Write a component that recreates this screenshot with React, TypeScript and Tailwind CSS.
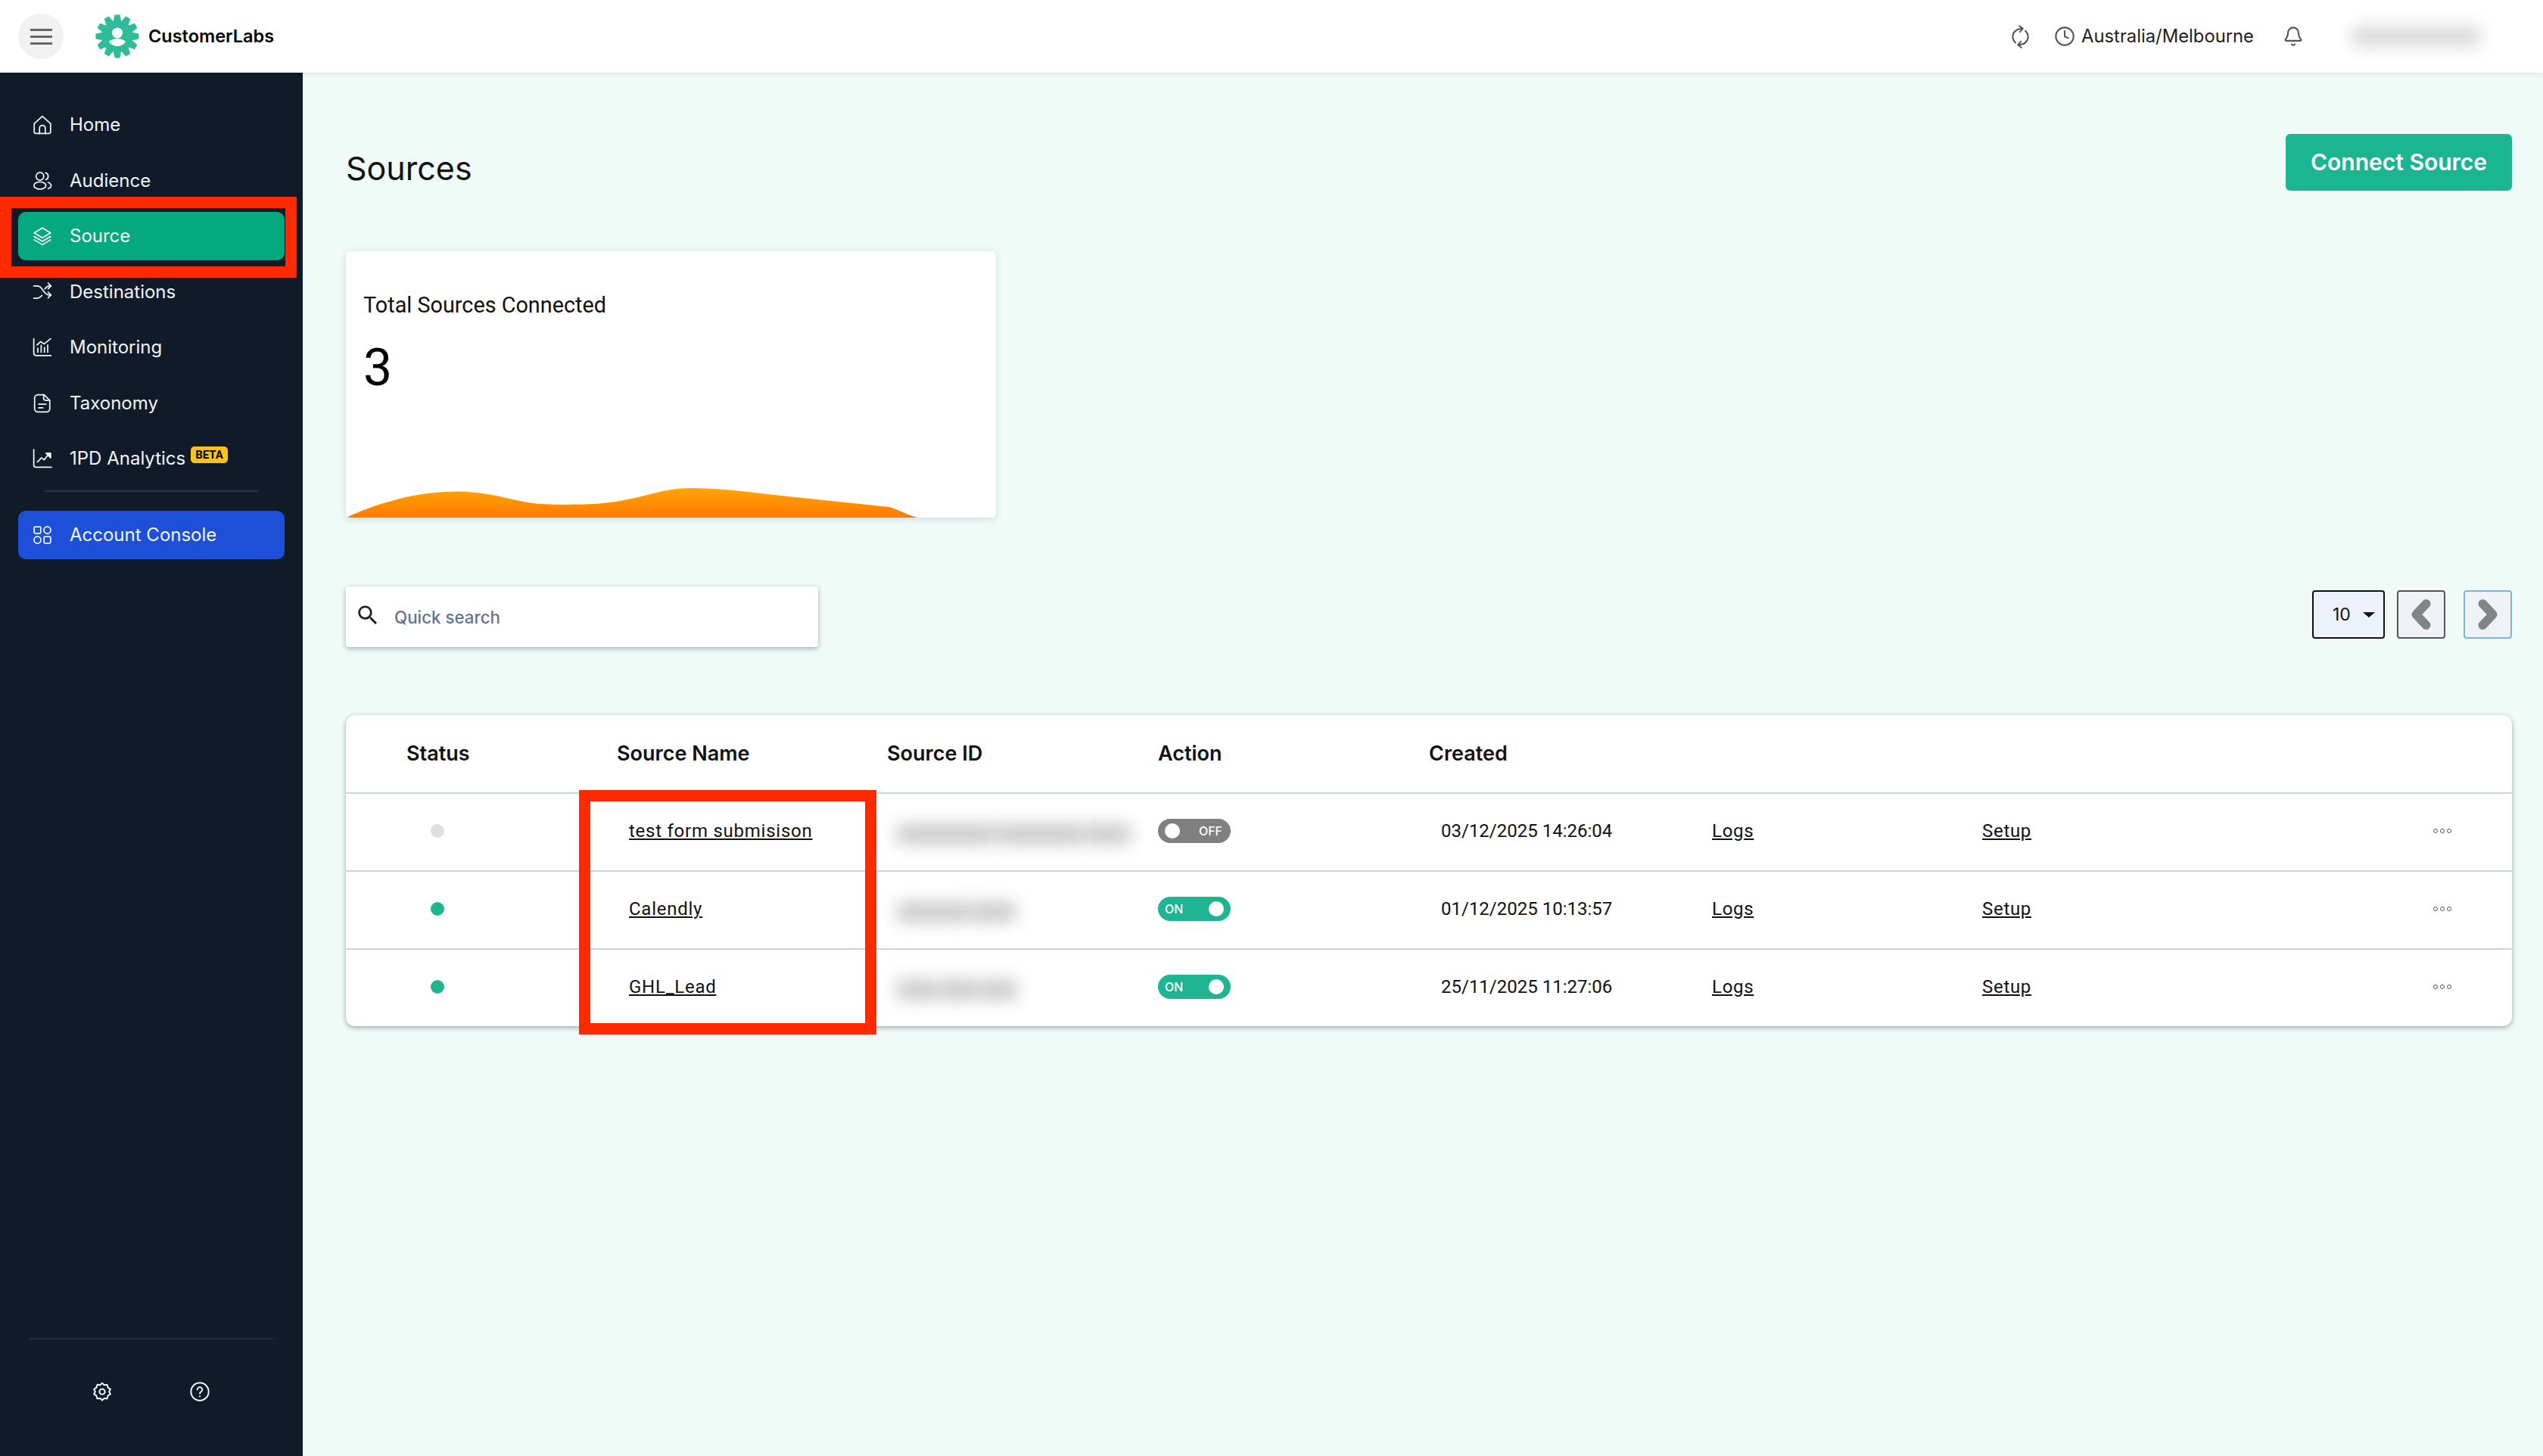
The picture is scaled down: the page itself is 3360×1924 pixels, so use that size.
import { Bell, Clock, RefreshCw } from "lucide-react";
import type { ReactNode } from "react";

const poppins = "font-['Inter','Noto_Sans',sans-serif]";
const roboto = "font-['Roboto','Liberation_Sans',sans-serif]";

function NavIcon({ children }: { children: ReactNode }) {
  return (
    <svg
      viewBox="0 0 24 24"
      fill="none"
      stroke="currentColor"
      strokeWidth="1.6"
      strokeLinecap="round"
      strokeLinejoin="round"
      className="w-[26px] h-[26px] shrink-0"
    >
      {children}
    </svg>
  );
}

const navItems: { label: string; icon: ReactNode; active?: boolean; beta?: boolean }[] = [
  {
    label: "Home",
    icon: (
      <NavIcon>
        <path d="M2 10.500 12 1.500l10 9v10a2 2 0 0 1-2 2H4a2 2 0 0 1-2-2z" />
        <path d="M8.500 22.500V16a3.500 3.500 0 0 1 7 0v6.500" />
      </NavIcon>
    ),
  },
  {
    label: "Audience",
    icon: (
      <NavIcon>
        <circle cx="9" cy="6.500" r="4.700" />
        <ellipse cx="9" cy="17.700" rx="7.300" ry="4.400" />
        <path d="M16 2.200a4.400 4.400 0 0 1 0 8.400" />
        <path d="M19 13.800c2.400.8 3.600 2.300 3.600 3.900s-1.200 3-3.600 3.800" />
      </NavIcon>
    ),
  },
  {
    label: "Source",
    active: true,
    icon: (
      <NavIcon>
        <path d="m12 2 10 6-10 6L2 8z" />
        <path d="m2 12.500 10 6 10-6" />
        <path d="m2 16.500 10 6 10-6" />
      </NavIcon>
    ),
  },
  {
    label: "Destinations",
    icon: (
      <NavIcon>
        <path d="M1.500 4.500h4c2.500 0 4.500 1.500 6 3.500l3 4c1.500 2 3.500 3.500 6 3.500h2" />
        <path d="M1.500 19.500h4c2.500 0 4.500-1.500 6-3.500" />
        <path d="M15 8c1.500-2 3-3.500 5.500-3.500h2" />
        <path d="m19 1 3.500 3.500L19 8" />
        <path d="m19 12 3.500 3.500L19 19" />
      </NavIcon>
    ),
  },
  {
    label: "Monitoring",
    icon: (
      <NavIcon>
        <path d="M1.500 1.500V19a3 3 0 0 0 3 3h18" />
        <path d="M5.500 9 10 5l4 3 8-6.500" />
        <path d="M6.500 18v-5M10.500 18V9.500M14.500 18v-6M18.500 18V9" />
      </NavIcon>
    ),
  },
  {
    label: "Taxonomy",
    icon: (
      <NavIcon>
        <path d="M6.500 1.500h7.500l7 7v10a4 4 0 0 1-4 4H6.500a4 4 0 0 1-4-4v-13a4 4 0 0 1 4-4z" />
        <path d="M13.500 1.500v4a3 3 0 0 0 3 3h4.500" />
        <path d="M7.500 13h9M7.500 17.500h5" />
      </NavIcon>
    ),
  },
  {
    label: "1PD Analytics",
    beta: true,
    icon: (
      <NavIcon>
        <path d="M1.500 1V20a2.500 2.500 0 0 0 2.500 2.500h19" />
        <path d="m6 16 5-5 3 2.500 6-7" />
        <path d="M16.500 5.500h5.500v5.500z" fill="currentColor" />
      </NavIcon>
    ),
  },
];

const rows = [
  { name: "test form submisison", on: false, created: "03/12/2025 14:26:04", blur: ["w-[130px]", "w-[115px]", "w-[60px]"] },
  { name: "Calendly", on: true, created: "01/12/2025 10:13:57", blur: ["w-[95px]", "w-[60px]"] },
  { name: "GHL_Lead", on: true, created: "25/11/2025 11:27:06", blur: ["w-[55px]", "w-[50px]", "w-[50px]"] },
];

function Logo() {
  const teeth = Array.from({ length: 12 }, (_, i) => i * 30);
  return (
    <svg viewBox="0 0 58 58" className="w-[58px] h-[58px]">
      {teeth.map((deg) => (
        <path
          key={deg}
          d="M25.500 .5h7l2 10h-11z"
          fill="#2fbd99"
          transform={`rotate(${deg} 29 29)`}
        />
      ))}
      <circle cx="29" cy="29" r="20.500" fill="#2fbd99" />
      <circle cx="29" cy="24.500" r="7" fill="#fff" />
      <path d="M18 36c3-3 7.500-4 11-4s8 1 11 4c-2.500 4-7 6-11 6s-8.500-2-11-6z" fill="#fff" />
    </svg>
  );
}

function Toggle({ on }: { on: boolean }) {
  return (
    <div
      className={`w-[96px] h-[32px] rounded-full flex items-center justify-between px-[9px] text-white text-[16px] font-medium ${poppins} ${
        on ? "bg-[#1fb592]" : "bg-[#808080] flex-row-reverse"
      }`}
    >
      <span className={on ? "" : "mr-[2px]"}>{on ? "ON" : "OFF"}</span>
      <span className="w-[20px] h-[20px] rounded-full bg-white" />
    </div>
  );
}

export default function App() {
  return (
    <div className="w-[3360px] h-[1924px] flex flex-col overflow-hidden bg-[#f0faf7]">
      <header className="h-[96px] shrink-0 bg-white flex items-center shadow-[0_2px_6px_rgba(0,0,0,0.08)] relative z-10">
        <button className="ml-[24px] w-[60px] h-[60px] rounded-full bg-[#f1f1f1] flex flex-col items-center justify-center gap-[6px]">
          <span className="w-[29px] h-[3px] bg-[#666]" />
          <span className="w-[29px] h-[3px] bg-[#666]" />
          <span className="w-[29px] h-[3px] bg-[#666]" />
        </button>
        <div className="ml-[42px]">
          <Logo />
        </div>
        <span className={`ml-[12px] text-[23.500px] font-semibold text-black ${poppins}`}>CustomerLabs</span>
        <div className="ml-auto flex items-center text-[#555]">
          <RefreshCw className="w-[27px] h-[27px] -rotate-[50deg]" strokeWidth={1.800} />
          <Clock className="ml-[31px] w-[28px] h-[28px]" strokeWidth={1.800} />
          <span className={`ml-[8px] text-[23.800px] text-[#222] ${poppins}`}>Australia/Melbourne</span>
          <Bell className="ml-[38px] w-[28px] h-[32px]" strokeWidth={1.800} />
          <div className="ml-[61px] mr-[80px] w-[175px] h-[28px] rounded-full bg-[#dcdcdc] blur-[10px]" />
        </div>
      </header>

      <div className="flex-1 flex min-h-0">
        <aside className="w-[400px] shrink-0 bg-[#101a28] text-[#f1f5f9] pt-[37px] pb-[72px] flex flex-col relative">
          <nav className="flex flex-col gap-[9.5px] px-[24px]">
            {navItems.map((item) => (
              <a
                key={item.label}
                className={`h-[64px] flex items-center pl-[19px] gap-[23px] rounded-[10px] text-[24px] ${poppins} ${
                  item.active ? "bg-[#06a97e]" : ""
                }`}
              >
                {item.icon}
                <span>{item.label}</span>
                {item.beta && (
                  <span className="-ml-[16px] mb-[10px] px-[6px] h-[22px] flex items-center rounded-[5px] bg-[#fdc21c] text-black text-[15px] font-bold font-['Roboto',sans-serif]">
                    BETA
                  </span>
                )}
              </a>
            ))}
          </nav>
          <div className="mt-[10px] mx-[59px] h-[2px] bg-[#2a3443]" />
          <a
            className={`mt-[25px] mx-[24px] h-[64px] flex items-center pl-[19px] gap-[23px] rounded-[10px] bg-[#1e4fd8] text-[24px] ${poppins}`}
          >
            <NavIcon>
              <rect x="2" y="2" width="8" height="8" rx="1.500" />
              <circle cx="18" cy="6" r="4.200" />
              <circle cx="6" cy="18" r="4.200" />
              <rect x="14" y="14" width="8" height="8" rx="1.500" />
            </NavIcon>
            <span>Account Console</span>
          </a>

          <div className="mt-auto mx-[39px] h-[2px] bg-[#232d3c]" />
          <div className="mt-[56px] flex pl-[122px] gap-[103px]">
            <svg viewBox="0 0 24 24" fill="none" stroke="currentColor" strokeWidth="1.900" strokeLinejoin="round" className="w-[26px] h-[26px]">
              <path d="M12 1.500 14.500 4l3.500-.5 1 3.500 3 2-1.500 3 1.500 3-3 2-1 3.500-3.500-.5-2.500 2.500L9.500 20 6 20.500 5 17l-3-2 1.500-3L2 9l3-2 1-3.500L9.500 4z" />
              <circle cx="12" cy="12" r="3.300" />
            </svg>
            <svg viewBox="0 0 24 24" fill="none" stroke="currentColor" strokeWidth="1.800" strokeLinecap="round" className="w-[26px] h-[26px]">
              <circle cx="12" cy="12" r="10.800" />
              <path d="M9 9.500a3 3 0 1 1 4.500 2.600c-1 .6-1.500 1.100-1.500 2.100" />
              <path d="M12 17.600v.1" />
            </svg>
          </div>

          {/* annotation */}
          <div className="absolute left-0 top-[164px] w-[392px] h-[107px] border-[15px] border-[#ff2a00] pointer-events-none" />
        </aside>

        <main className="flex-1 min-w-0 pt-[81px] pl-[57px] pr-[41px]">
          <div className="flex items-start justify-between h-[75px]">
            <h1 className={`mt-[14px] text-[43px] leading-[62px] text-[#111] ${poppins}`}>Sources</h1>
            <button className={`w-[299px] h-[75px] rounded-[6px] bg-[#1cb592] text-white text-[30px] font-semibold ${poppins}`}>
              Connect Source
            </button>
          </div>

          <section className="relative mt-[80px] w-[859px] h-[352px] bg-white rounded-[6px] shadow-[0_2px_10px_rgba(148,163,184,0.35)] overflow-hidden pl-[23px] pt-[53px]">
            <p className={`text-[28.800px] leading-[36px] text-[#111] ${roboto}`}>Total Sources Connected</p>
            <p className={`mt-[25px] text-[68px] leading-[80px] text-black ${roboto}`}>3</p>
            <svg viewBox="0 0 859 39" className="absolute left-0 bottom-0 w-[859px] h-[39px]">
              <defs>
                <linearGradient id="area" x1="0" y1="0" x2="0" y2="1">
                  <stop offset="0" stopColor="#ffa60a" />
                  <stop offset="1" stopColor="#ff7a00" />
                </linearGradient>
              </defs>
              <path
                d="M0 39C14 33 34 24 57 18 C85 9 120 4 149 4.500 C175 5 195 9 212 13 C232 18 250 21 270 21.500 C300 22 330 22 356 18 C395 12 420 0 454 0 C490 0 525 4 557 8 L718 25 C730 28 740 35 755 39Z"
                fill="url(#area)"
              />
            </svg>
          </section>

          <div className="mt-[91px] flex items-start justify-between h-[80px]">
            <label className="w-[624px] h-[80px] bg-white rounded-[4px] shadow-[0_2px_6px_rgba(71,85,105,0.45)] flex items-center pl-[12px] gap-[18px]">
              <svg viewBox="0 0 24 24" fill="#222" className="w-[34px] h-[34px] -mt-[4px]">
                <path d="M15.500 14h-.79l-.28-.27A6.470 6.470 0 0 0 16 9.500 6.500 6.500 0 1 0 9.500 16c1.610 0 3.090-.59 4.230-1.570l.27.28v.79l5 4.990L20.490 19l-4.990-5zm-6 0C7.010 14 5 11.990 5 9.500S7.010 5 9.500 5 14 7.010 14 9.500 11.990 14 9.500 14z" />
              </svg>
              <span className={`mt-[1px] text-[22.300px] font-medium text-[#64748b] ${poppins}`}>Quick search</span>
            </label>
            <div className="mt-[5px] flex items-start">
              <div className={`w-[96px] h-[64px] rounded-[4px] border-2 border-[#111] bg-[#edf2fa] flex items-center pl-[25px] text-[23px] text-[#111] ${poppins}`}>
                <span>10</span>
                <span className="ml-[16px] w-0 h-0 border-x-[8px] border-x-transparent border-t-[7px] border-t-[#111]" />
              </div>
              <button className="ml-[16px] w-[64px] h-[64px] rounded-[4px] border-2 border-[#555] bg-[#eff3f8] flex items-center justify-center">
                <svg viewBox="0 0 36 50" className="w-[30px] h-[42px]" fill="none" stroke="#808585" strokeWidth="14" strokeLinecap="round" strokeLinejoin="round">
                  <path d="M26 8 10 25l16 17" />
                </svg>
              </button>
              <button className="ml-[24px] w-[64px] h-[64px] rounded-[4px] border-2 border-[#7fb5d5] bg-[#eff3f8] flex items-center justify-center">
                <svg viewBox="0 0 36 50" className="w-[30px] h-[42px]" fill="none" stroke="#808585" strokeWidth="14" strokeLinecap="round" strokeLinejoin="round">
                  <path d="m10 8 16 17-16 17" />
                </svg>
              </button>
            </div>
          </div>

          <section className="relative mt-[90px] bg-white rounded-[12px] shadow-[0_2px_6px_rgba(71,85,105,0.5)]">
            <div className={`h-[102px] grid grid-cols-[278px_357px_358px_358px_1fr] items-center pl-[80px] text-[27px] font-semibold text-[#111] ${poppins}`}>
              <span>Status</span>
              <span>Source Name</span>
              <span>Source ID</span>
              <span>Action</span>
              <span>Created</span>
            </div>
            {rows.map((row) => (
              <div key={row.name} className={`h-[103px] border-t-2 border-[#c9d6d6] pb-[3px] flex items-center text-[24px] text-[#111] ${roboto}`}>
                <div className="w-[358px] flex justify-start pl-[112px]">
                  <span className={`w-[18px] h-[18px] rounded-full ${row.on ? "bg-[#1fb592]" : "bg-[#dfdfdf]"}`} />
                </div>
                <a className="w-[357px] pl-[16px] underline tracking-[0.75px]">{row.name}</a>
                <div className="w-[358px] pl-[13px] mt-[8px]">
                  <div className="flex gap-[2px] blur-[11px]">
                    {row.blur.map((w, i) => (
                      <div key={i} className={`h-[26px] bg-[#c8c8c8] rounded-[6px] ${w}`} />
                    ))}
                  </div>
                </div>
                <div className="w-[374px]">
                  <Toggle on={row.on} />
                </div>
                <span className="w-[358px]">{row.created}</span>
                <a className="w-[357px] underline tracking-[0.7px]">Logs</a>
                <a className="w-[596px] underline tracking-[0.7px]">Setup</a>
                <span className="flex gap-[3px]">
                  <span className="w-[6px] h-[6px] rounded-full border border-[#555]" />
                  <span className="w-[6px] h-[6px] rounded-full border border-[#555]" />
                  <span className="w-[6px] h-[6px] rounded-full border border-[#555]" />
                </span>
              </div>
            ))}
            {/* annotation */}
            <div className="absolute left-[308px] top-[99px] w-[393px] h-[323px] border-[15px] border-[#ff2a00] pointer-events-none" />
          </section>
        </main>
      </div>
    </div>
  );
}
